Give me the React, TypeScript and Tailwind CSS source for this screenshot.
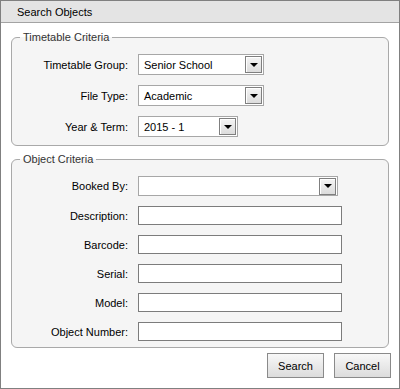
import React from "react";

type SelectProps = { value?: string; width: string; height: string };

function DropSelect({ value, width, height }: SelectProps) {
  return (
    <div className={`${width} ${height} flex items-center border border-[#a7a7a7] bg-white`}>
      <span className="flex-1 pl-[5px] truncate">{value}</span>
      <div className="mr-[1px] flex h-[17px] w-[17px] items-center justify-center border border-[#7f7f7f] bg-gradient-to-b from-[#f4f4f4] to-[#dcdcdc] shadow-[inset_1px_1px_0_#ffffff]">
        <div className="h-0 w-0 border-x-[4px] border-t-[4px] border-x-transparent border-t-black" />
      </div>
    </div>
  );
}

function TextField() {
  return <div className="h-[19px] w-[204px] border border-[#7c7c7c] bg-white" />;
}

function Row({ label, children, className }: { label: string; children: React.ReactNode; className?: string }) {
  return (
    <div className={`flex items-center ${className ?? ""}`}>
      <label className="w-[116px] shrink-0 text-right">{label}</label>
      <div className="ml-[10px]">{children}</div>
    </div>
  );
}

export default function App() {
  return (
    <div className="flex h-[389px] w-[400px] flex-col border border-[#808080] bg-white font-['Liberation_Sans',Arial,sans-serif] text-[11px] leading-[14px] text-black">
      {/* Title bar */}
      <div className="flex h-[22px] shrink-0 items-center border-b border-[#a3a3a3] bg-[#e4e4e4] pl-[16px]">
        Search Objects
      </div>

      {/* Timetable criteria */}
      <fieldset className="ml-[10px] mt-[7px] w-[378px] rounded-[6px] border border-[#a9a9a9] bg-[#f5f5f5] pb-[8px]">
        <legend className="ml-[8px] px-[3px] leading-[14px] text-[#333]">Timetable Criteria</legend>
        <div className="flex flex-col gap-[10px] pt-[10px]">
          <Row label="Timetable Group:">
            <DropSelect value="Senior School" width="w-[126px]" height="h-[21px]" />
          </Row>
          <Row label="File Type:">
            <DropSelect value="Academic" width="w-[126px]" height="h-[21px]" />
          </Row>
          <Row label="Year & Term:">
            <DropSelect value="2015 - 1" width="w-[100px]" height="h-[21px]" />
          </Row>
        </div>
      </fieldset>

      {/* Object criteria */}
      <fieldset className="ml-[10px] mt-[6px] w-[378px] rounded-[6px] border border-[#a9a9a9] bg-[#f5f5f5] pb-[6px]">
        <legend className="ml-[8px] px-[3px] leading-[14px] text-[#333]">Object Criteria</legend>
        <div className="flex flex-col gap-[10px] pt-[10px]">
          <Row label="Booked By:">
            <DropSelect width="w-[200px]" height="h-[20px]" />
          </Row>
          <Row label="Description:">
            <TextField />
          </Row>
          <Row label="Barcode:">
            <TextField />
          </Row>
          <Row label="Serial:">
            <TextField />
          </Row>
          <Row label="Model:">
            <TextField />
          </Row>
          <Row label="Object Number:">
            <TextField />
          </Row>
        </div>
      </fieldset>

      {/* Buttons */}
      <div className="mt-[5px] flex justify-end gap-[10px] pr-[8px]">
        <button className="h-[25px] w-[57px] border border-[#8a8a8a] bg-gradient-to-b from-[#f8f8f8] to-[#dcdcdc]">
          Search
        </button>
        <button className="h-[25px] w-[57px] border border-[#8a8a8a] bg-gradient-to-b from-[#f8f8f8] to-[#dcdcdc]">
          Cancel
        </button>
      </div>
    </div>
  );
}
